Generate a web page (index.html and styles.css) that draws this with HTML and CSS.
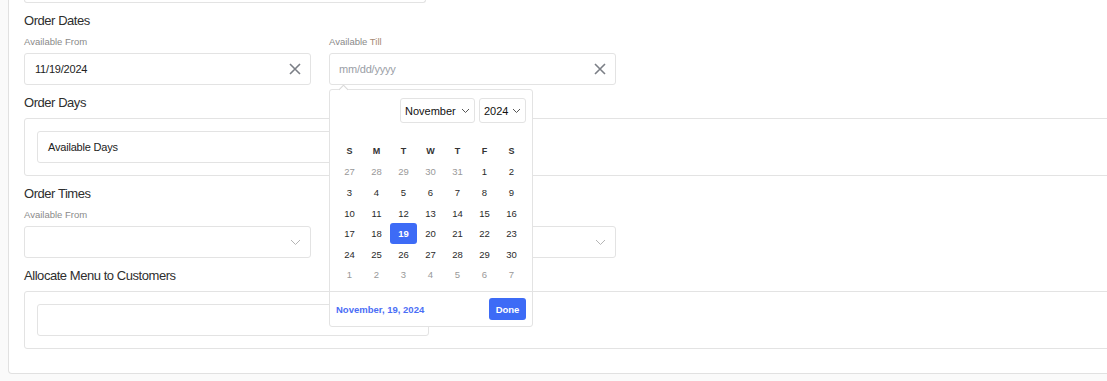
FILE: index.html
```html
<!DOCTYPE html>
<html>
<head>
<meta charset="utf-8">
<link rel="stylesheet" href="styles.css">
</head>
<body>
<div class="card">
  <div class="stub"></div>

  <h3 class="title">Order Dates</h3>
  <div class="row">
    <div class="field">
      <div class="label">Available From</div>
      <div class="input">
        <span class="value">11/19/2024</span>
        <svg class="clear" width="14" height="14" viewBox="0 0 14 14"><path d="M2 2L12 12M12 2L2 12" stroke="#7b7f86" stroke-width="1.6" fill="none"/></svg>
      </div>
    </div>
    <div class="field">
      <div class="label">Available <span class="till">Till</span></div>
      <div class="input anchor">
        <span class="placeholder">mm/dd/yyyy</span>
        <svg class="clear" width="14" height="14" viewBox="0 0 14 14"><path d="M2 2L12 12M12 2L2 12" stroke="#7b7f86" stroke-width="1.6" fill="none"/></svg>
        <div class="picker">
          <div class="arrow"></div>
          <div class="picker-head">
            <div class="sel month">November <svg width="9" height="6" viewBox="0 0 9 6"><path d="M1 1L4.5 4.5L8 1" stroke="#555" stroke-width="1" fill="none"/></svg></div>
            <div class="sel year">2024 <svg width="9" height="6" viewBox="0 0 9 6"><path d="M1 1L4.5 4.5L8 1" stroke="#555" stroke-width="1" fill="none"/></svg></div>
          </div>
          <div class="days">
            <span class="dh">S</span><span class="dh">M</span><span class="dh">T</span><span class="dh">W</span><span class="dh">T</span><span class="dh">F</span><span class="dh">S</span>
            <span class="o">27</span><span class="o">28</span><span class="o">29</span><span class="o">30</span><span class="o">31</span><span>1</span><span>2</span>
            <span>3</span><span>4</span><span>5</span><span>6</span><span>7</span><span>8</span><span>9</span>
            <span>10</span><span>11</span><span>12</span><span>13</span><span>14</span><span>15</span><span>16</span>
            <span>17</span><span>18</span><span class="sel-day">19</span><span>20</span><span>21</span><span>22</span><span>23</span>
            <span>24</span><span>25</span><span>26</span><span>27</span><span>28</span><span>29</span><span>30</span>
            <span class="o">1</span><span class="o">2</span><span class="o">3</span><span class="o">4</span><span class="o">5</span><span class="o">6</span><span class="o">7</span>
          </div>
          <div class="picker-foot">
            <span class="picked">November, 19, 2024</span>
            <button class="done">Done</button>
          </div>
        </div>
      </div>
    </div>
  </div>

  <h3 class="title">Order Days</h3>
  <div class="box">
    <div class="input inner"><span class="value">Available Days</span></div>
  </div>

  <h3 class="title">Order Times</h3>
  <div class="row">
    <div class="field">
      <div class="label">Available From</div>
      <div class="input">
        <span></span>
        <svg class="chev" width="11" height="7" viewBox="0 0 11 7"><path d="M1 1L5.5 5.5L10 1" stroke="#b5b5b5" stroke-width="1" fill="none"/></svg>
      </div>
    </div>
    <div class="field">
      <div class="label">&nbsp;</div>
      <div class="input">
        <span></span>
        <svg class="chev" width="11" height="7" viewBox="0 0 11 7"><path d="M1 1L5.5 5.5L10 1" stroke="#b5b5b5" stroke-width="1" fill="none"/></svg>
      </div>
    </div>
  </div>

  <h3 class="title">Allocate Menu to Customers</h3>
  <div class="box">
    <div class="input inner"></div>
  </div>
</div>
</body>
</html>
```

FILE: styles.css
```css
* { box-sizing: border-box; }
html, body {
  margin: 0;
  padding: 0;
  background: #fafafa;
  overflow: hidden;
  font-family: "Liberation Sans", Arial, sans-serif;
  color: #333;
}
.card {
  margin-left: 8px;
  width: 1130px;
  background: #fff;
  border: 1px solid #e1e1e1;
  border-top: 0;
  border-radius: 0 0 4px 4px;
  padding: 0 15px 24px 15px;
}
.stub {
  width: 402px;
  height: 3px;
  border: 1px solid #e3e3e3;
  border-top: 0;
  border-radius: 0 0 4px 4px;
}
.title {
  margin: 10px 0 7px 0;
  font-size: 13px;
  line-height: 16px;
  font-weight: normal;
  letter-spacing: -0.45px;
  color: #2e2e2e;
}
.row {
  display: flex;
  gap: 18px;
}
.field {
  width: 287px;
}
.label {
  font-size: 9.5px;
  line-height: 12px;
  color: #8a8a8a;
  margin-bottom: 5px;
}
.till { color: #a88a74; }
.input {
  height: 32px;
  border: 1px solid #e3e3e3;
  border-radius: 3px;
  display: flex;
  align-items: center;
  justify-content: space-between;
  padding: 0 9px 0 10px;
  font-size: 11px;
  background: #fff;
}
.value { color: #222; letter-spacing: -0.2px; }
.placeholder { color: #9a9ea6; letter-spacing: -0.2px; margin-left: -1px; }
.clear { margin-right: -1px; }
.chev { margin-right: 0; }
.anchor { position: relative; }
.box {
  border: 1px solid #e3e3e3;
  border-radius: 3px;
  padding: 12px;
}
.inner {
  width: 392px;
}
.picker {
  position: absolute;
  top: calc(100% + 5px);
  left: -1px;
  width: 204px;
  height: 238px;
  background: #fff;
  border: 1px solid #e3e3e3;
  border-radius: 3px;
  z-index: 5;
  display: flex;
  flex-direction: column;
}
.arrow {
  position: absolute;
  top: -4px;
  left: 10px;
  width: 7px;
  height: 7px;
  background: #fff;
  border-left: 1px solid #d8d8d8;
  border-top: 1px solid #d8d8d8;
  transform: rotate(45deg);
}
.picker-head {
  display: flex;
  justify-content: flex-end;
  gap: 4px;
  padding: 8px 6px 0 6px;
}
.sel {
  height: 25px;
  border: 1px solid #e3e3e3;
  border-radius: 3px;
  display: flex;
  align-items: center;
  justify-content: space-between;
  padding: 0 4px 0 4px;
  font-size: 11px;
  color: #111;
}
.month { width: 75px; }
.year { width: 47px; }
.days {
  margin-top: 18px;
  padding: 0 6px;
  display: grid;
  grid-template-columns: repeat(7, 27px);
  grid-auto-rows: 20.6px;
  font-size: 9.5px;
}
.days span {
  display: flex;
  align-items: center;
  justify-content: center;
  color: #2a2a2a;
}
.days .dh {
  font-weight: bold;
  font-size: 9px;
  color: #333;
}
.days .o { color: #999; }
.days .sel-day {
  background: #3d6bf6;
  color: #fff;
  font-weight: bold;
  border-radius: 3px;
}
.picker-foot {
  margin-top: 5.5px;
  border-top: 1px solid #e3e3e3;
  flex: 1;
  display: flex;
  align-items: center;
  justify-content: space-between;
  padding: 1px 6px 0 6px;
}
.picked {
  font-size: 9.5px;
  font-weight: bold;
  color: #4b6ef6;
}
.done {
  width: 37px;
  height: 22px;
  border: 0;
  border-radius: 3px;
  background: #3d6bf6;
  color: #fff;
  font-family: "Liberation Sans", Arial, sans-serif;
  font-weight: bold;
  font-size: 9.5px;
  padding: 0;
}
```
